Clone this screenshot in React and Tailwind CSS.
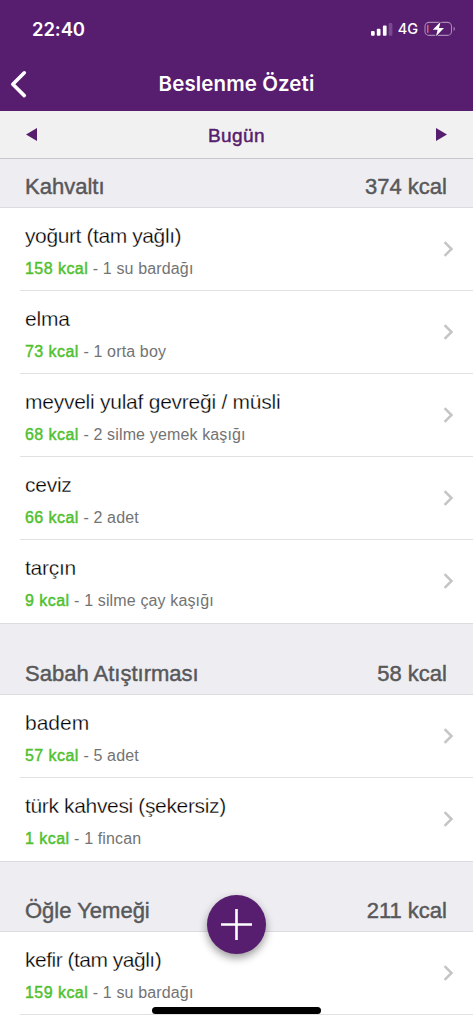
const sections = [
  {
    title: 'Kahvaltı',
    kcal: 374,
    items: [
      ['yoğurt (tam yağlı)', 158, '1 su bardağı', 'tracking-[-0.4px]'],
      ['elma', 73, '1 orta boy', 'tracking-[-0.2px]'],
      ['meyveli yulaf gevreği / müsli', 68, '2 silme yemek kaşığı', 'tracking-[-0.25px]'],
      ['ceviz', 66, '2 adet', 'tracking-[-0.25px]'],
      ['tarçın', 9, '1 silme çay kaşığı', 'tracking-[-0.25px]'],
    ],
  },
  {
    title: 'Sabah Atıştırması',
    kcal: 58,
    items: [
      ['badem', 57, '5 adet', 'tracking-[0px]'],
      ['türk kahvesi (şekersiz)', 1, '1 fincan', 'tracking-[-0.35px]'],
    ],
  },
  {
    title: 'Öğle Yemeği',
    kcal: 211,
    continues: true,
    items: [['kefir (tam yağlı)', 159, '1 su bardağı', 'tracking-[-0.5px]']],
  },
];

function StatusBar() {
  return (
    <div className="flex h-[58px] items-center justify-between pl-8 pr-[17px]">
      <span className="text-[18.5px] font-semibold leading-none tracking-[-0.1px]">22:40</span>
      <div className="flex items-center">
        <svg className="block h-[14px] w-[23px]" viewBox="0 0 23 14" fill="#fff">
          <rect x="0" y="9" width="3.7" height="4.8" rx="1" />
          <rect x="5.8" y="6.7" width="3.7" height="7.1" rx="1" />
          <rect x="11.9" y="3.5" width="3.7" height="10.3" rx="1" />
          <rect x="17.7" y="1" width="3.7" height="12.8" rx="1" opacity="0.2" />
        </svg>
        <span className="ml-[4px] pt-px text-[14.5px] font-medium leading-none">4G</span>
        <svg className="ml-[6px] block h-4 w-[32px]" viewBox="0 0 32 16">
          <rect x="1" y="1.4" width="26.5" height="13" rx="4" fill="none" stroke="#a888b5" strokeWidth="1.1" />
          <path d="M29.6 5.8c1.7.6 1.7 3.6 0 4.2z" fill="#a888b5" />
          <rect x="3" y="3.8" width="1.5" height="8.2" rx="0.7" fill="#ee5c5b" />
          <path d="M16.6 0.8 8.8 8.8h4.8L12 15.2l8-8.2h-5z" fill="#fff" stroke="#571d6e" strokeWidth="1.6" paintOrder="stroke" />
        </svg>
      </div>
    </div>
  );
}

function TitleBar() {
  return (
    <div className="grid h-[53px] grid-cols-[60px_1fr_60px] items-center">
      <button className="pb-px pl-[9px]" aria-label="Geri">
        <svg className="block h-[29px] w-[18px]" viewBox="0 0 18 29" fill="none" stroke="#fff" strokeWidth="3.6" strokeLinecap="round" strokeLinejoin="round">
          <path d="M15.3 2.8 3.8 14.2l11.5 11.4" />
        </svg>
      </button>
      <h1 className="whitespace-nowrap text-center text-[20.5px] font-semibold leading-none tracking-[0.1px]">Beslenme Özeti</h1>
    </div>
  );
}

function DateBar() {
  return (
    <div className="flex h-12 items-center justify-between border-b border-[#c8c7cc] bg-[#f1f1f1] pl-[26px] pr-[26px] text-[#571d6e]">
      <svg className="block h-[13px] w-[11px]" viewBox="0 0 11 13" fill="currentColor">
        <path d="M0 6.5 11 0v13z" />
      </svg>
      <span className="pt-px text-[19px] leading-none tracking-[0.4px] [-webkit-text-stroke:0.5px_#571d6e]">Bugün</span>
      <svg className="block h-[13px] w-[11px]" viewBox="0 0 11 13" fill="currentColor">
        <path d="M11 6.5 0 0v13z" />
      </svg>
    </div>
  );
}

function FoodRow({ item: [name, kcal, amount, tracking], last }) {
  return (
    <div className="h-[83.1px] bg-white pl-5">
      <div className={`flex h-full items-center justify-between border-b pl-[5px] pr-[19px] ${last ? 'border-transparent' : 'border-[#e1e1e3]'}`}>
        <div className="flex flex-col pt-[4.4px]">
          <span className={`text-[21px] leading-6 text-black [-webkit-text-stroke:0.3px_#fff] ${tracking}`}>{name}</span>
          <span className="mt-[11px] text-[16px] leading-5 tracking-[0.14px] text-[#737373]">
            <span className="tracking-[0.45px] text-[#4fc12f] [-webkit-text-stroke:0.45px_#4fc12f]">{kcal} kcal</span> - {amount}
          </span>
        </div>
        <svg className="block h-4 w-[11px]" viewBox="0 0 11 16" fill="none" stroke="#c5c5c8" strokeWidth="2.5">
          <path d="M1.6 1.2 8.5 8l-6.9 6.8" />
        </svg>
      </div>
    </div>
  );
}

function Section({ section, first }) {
  return (
    <section>
      <div className={`flex items-end justify-between border-b border-[#dcdce0] bg-[#eeeef2] pb-[8px] pl-[25px] pr-[26px] text-[22px] leading-6 text-[#58585a] [-webkit-text-stroke:0.45px_#58585a] ${first ? 'h-[49px]' : 'h-[71.3px] border-t'}`}>
        <h2>{section.title}</h2>
        <span>{section.kcal} kcal</span>
      </div>
      {section.items.map((item, i) => (
        <FoodRow key={item[0]} item={item} last={i === section.items.length - 1 && !section.continues} />
      ))}
    </section>
  );
}

export default function App() {
  return (
    <div className="relative h-[1024px] w-[473px] overflow-hidden bg-white font-['Liberation_Sans',sans-serif]">
      <header className="h-[111px] bg-[#571d6e] font-['Inter',sans-serif] text-white">
        <StatusBar />
        <TitleBar />
      </header>
      <DateBar />
      <main>
        {sections.map((s, i) => (
          <Section key={s.title} section={s} first={i === 0} />
        ))}
      </main>
      <button aria-label="Ekle" className="absolute left-[207px] top-[895px] flex size-[59px] items-center justify-center rounded-full bg-[#571d6e] shadow-[0_4px_8px_rgba(0,0,0,0.4)]">
        <svg className="block size-[31px]" viewBox="0 0 31 31" stroke="#fff" strokeWidth="2.6">
          <path d="M15.5 0v31M0 15.5h31" />
        </svg>
      </button>
      <div className="absolute left-[152px] top-[1007px] h-[7px] w-[169px] rounded-full bg-black" />
    </div>
  );
}
